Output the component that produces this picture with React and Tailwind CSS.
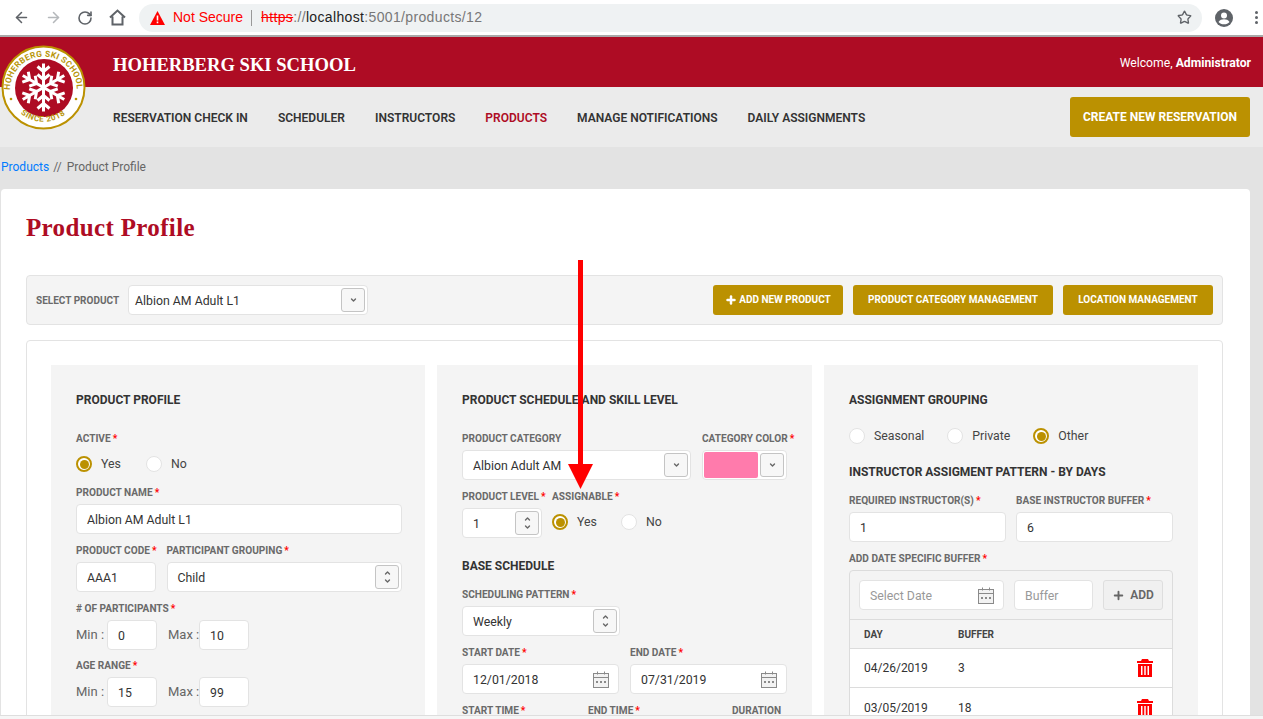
import { ArrowLeft, ArrowRight, RotateCw, Star, ChevronDown, ChevronUp, Plus } from 'lucide-react'

function Label({ children, req = true, className = '' }) {
  return (
    <div className={`h-4 mb-1 pt-[1px] flex items-center text-[10.100px] font-bold text-[#6a6a6a] whitespace-nowrap ${className}`}>
      {children}
      {req && <span className="text-[#f00] ml-[2px]">*</span>}
    </div>
  )
}

function Input({ value, placeholder, className = '', children }) {
  return (
    <div className={`h-[30px] bg-white border border-[#e3e3e3] rounded-[4px] flex items-center text-[12.300px] text-[#333] shrink-0 ${className}`}>
      {value !== undefined && <span className="pl-[10px] pt-[2px]">{value}</span>}
      {placeholder && <span className="pl-[10px] pt-[2px] text-[#999]">{placeholder}</span>}
      {children}
    </div>
  )
}

function SelectBtn({ both }) {
  return (
    <span className="ml-auto mr-[2px] w-6 h-6 border border-[#c4c4c4] rounded-[3px] flex flex-col items-center justify-center text-[#666] bg-[#f7f7f7]">
      {both && <ChevronUp className="w-[11px] h-[8px]" strokeWidth={4} />}
      <ChevronDown className="w-[11px] h-[8px]" strokeWidth={4} />
    </span>
  )
}

function Calendar() {
  return (
    <svg className="ml-auto mr-[9px]" width="16" height="17" viewBox="0 0 16 17" fill="none" stroke="#8a8a8a">
      <rect x="0.5" y="2.5" width="15" height="14" fill="#f2f2f2" />
      <path d="M0.5 6.5h15M4.5 0.5v3M11.5 0.5v3" />
      <path d="M3 11h2M7 11h2M11 11h2" strokeWidth="2" />
    </svg>
  )
}

function Radio({ label, checked, className = '' }) {
  return (
    <span className={`flex items-center text-[12.300px] text-[#444] ${className}`}>
      {checked ? (
        <span className="w-4 h-4 rounded-full border-2 border-[#bb9101] p-[1.500px] bg-white mr-[9px]">
          <span className="block w-full h-full rounded-full bg-[#bb9101]" />
        </span>
      ) : (
        <span className="w-4 h-4 rounded-full border border-[#e3e3e3] bg-white mr-[9px]" />
      )}
      {label}
    </span>
  )
}

function Title({ children, className = '' }) {
  return <div className={`text-[12px] font-bold text-[#333] whitespace-nowrap ${className}`}>{children}</div>
}

function GoldBtn({ children, className = '' }) {
  return (
    <button className={`h-[30px] pb-[1px] bg-[#bb9101] rounded-[3px] text-white text-[10px] font-bold flex items-center justify-center whitespace-nowrap ${className}`}>
      {children}
    </button>
  )
}

function Trash() {
  return (
    <svg width="16" height="18" viewBox="0 0 16 18" fill="#f00">
      <path d="M5 0h6l1 2h4v2H0V2h4z" />
      <path d="M1 5h14v13H1zM4 7v9h1.500V7zM7.250 7v9h1.500V7zM10.500 7v9H12V7z" fillRule="evenodd" />
    </svg>
  )
}

function Logo() {
  const arm = 'M0 0V-24M0 -8L-6 -13M0 -8L6 -13M0 -16L-6 -21M0 -16L6 -21'
  return (
    <svg className="absolute left-0 top-[44px]" width="88" height="88" viewBox="0 0 88 88">
      <circle cx="43.500" cy="43.500" r="41" fill="#fff" stroke="#bb9101" strokeWidth="2" />
      <circle cx="44" cy="44" r="29" fill="#ae0c24" />
      <defs>
        <path id="logo-top" d="M10 46A33.500 33.500 0 1 1 77 46" />
        <path id="logo-bottom" d="M14 62A35.500 35.500 0 0 0 73 62" />
      </defs>
      <text fill="#b8960a" fontSize="8.400" fontWeight="700" fontFamily="Roboto, sans-serif">
        <textPath href="#logo-top" textLength="104" lengthAdjust="spacing">HOHERBERG SKI SCHOOL</textPath>
      </text>
      <text fill="#b8960a" fontSize="8" fontWeight="700" fontFamily="Roboto, sans-serif">
        <textPath href="#logo-bottom" startOffset="10" textLength="48" lengthAdjust="spacing">SINCE 2018</textPath>
      </text>
      <circle cx="11" cy="55" r="1.300" fill="#bb9101" />
      <circle cx="76" cy="55" r="1.300" fill="#bb9101" />
      <g transform="translate(43.500 43.500)" stroke="#fff" strokeWidth="3" fill="none">
        {[0, 60, 120, 180, 240, 300].map((r) => (
          <path key={r} d={arm} transform={`rotate(${r})`} />
        ))}
      </g>
    </svg>
  )
}

function ChromeBar() {
  return (
    <div className="h-[37px] bg-white border-b-2 border-[#a9a9a9] flex items-center pl-[13px] shrink-0 font-['Liberation_Sans',sans-serif]">
      <ArrowLeft className="w-[17px] h-[17px] text-[#5f6368]" strokeWidth={2.2} />
      <ArrowRight className="w-[17px] h-[17px] text-[#b5b8bb] ml-[15px]" strokeWidth={2.2} />
      <RotateCw className="w-[16px] h-[16px] text-[#5f6368] ml-[15px]" strokeWidth={2.4} />
      <svg className="ml-[16px]" width="17" height="17" viewBox="0 0 17 17" fill="none" stroke="#5f6368" strokeWidth="2">
        <path d="M1 8.500L8.500 1.500L16 8.500M3.500 7.500V15.500H13.500V7.500" />
      </svg>
      <div className="ml-[13px] w-[1063px] h-7 rounded-full bg-[#eff2f3] flex items-center pl-[11px] text-[14px]">
        <svg width="15" height="14" viewBox="0 0 15 14">
          <path d="M7.500 0L15 14H0z" fill="#f00" />
          <path d="M6.700 4.500h1.600v5H6.700zM6.700 10.500h1.600v1.800H6.700z" fill="#fff" />
        </svg>
        <span className="text-[#f00] ml-[8px]">Not Secure</span>
        <span className="w-px h-4 bg-[#999] ml-2 mr-[9px]" />
        <span className="tracking-[0.350px]">
          <span className="text-[#f00] line-through">https</span>
          <span className="text-[#777]">://</span>
          <span className="text-[#222]">localhost</span>
          <span className="text-[#777]">:5001/products/12</span>
        </span>
        <Star className="ml-auto mr-[10px] w-[15px] h-[15px] text-[#5f6368]" strokeWidth={2.2} />
      </div>
      <svg className="ml-[13px]" width="18" height="18" viewBox="0 0 18 18">
        <circle cx="9" cy="9" r="9" fill="#5f6368" />
        <circle cx="9" cy="6.500" r="3" fill="#fff" />
        <path d="M3.500 13c1-2 3.500-2.700 5.500-2.700s4.500 .7 5.500 2.700c-1.300 1.500-3.300 2.300-5.500 2.300s-4.200-.8-5.500-2.300z" fill="#fff" />
      </svg>
      <div className="ml-[22px] flex flex-col gap-[2px]">
        <span className="w-[3px] h-[3px] rounded-full bg-[#5f6368]" />
        <span className="w-[3px] h-[3px] rounded-full bg-[#5f6368]" />
        <span className="w-[3px] h-[3px] rounded-full bg-[#5f6368]" />
      </div>
    </div>
  )
}

export default function App() {
  const nav = ['RESERVATION CHECK IN', 'SCHEDULER', 'INSTRUCTORS', 'PRODUCTS', 'MANAGE NOTIFICATIONS', 'DAILY ASSIGNMENTS']

  return (
    <div className="relative h-[719px] overflow-hidden bg-[#e3e3e3] font-['Roboto',sans-serif] flex flex-col">
      <ChromeBar />

      {/* Header */}
      <header className="h-[50px] bg-[#ae0c24] flex items-center justify-between pl-[113px] pr-3 shrink-0">
        <span className="font-['Liberation_Serif',serif] font-bold text-white text-[18.600px] mt-[5px]">HOHERBERG SKI SCHOOL</span>
        <span className="text-white text-[12.200px] mt-[2px]">Welcome, <b>Administrator</b></span>
      </header>

      {/* Nav */}
      <nav className="h-[60px] bg-[#ebebeb] flex items-center pl-[113px] pr-[13px] gap-[30px] shrink-0">
        {nav.map((n) => (
          <span key={n} className={`text-[12.030px] font-semibold whitespace-nowrap mt-[2px] ${n === 'PRODUCTS' ? 'text-[#ae0c24]' : 'text-[#333]'}`}>{n}</span>
        ))}
        <button className="ml-auto w-[180px] h-10 bg-[#bb9101] rounded-[3px] text-white text-[12px] font-bold">CREATE NEW RESERVATION</button>
      </nav>

      {/* Breadcrumb */}
      <div className="h-[42px] pb-[2px] flex items-center pl-[1px] text-[12px] text-[#666] shrink-0">
        <span className="text-[#007bff]">Products</span>
        <span className="ml-1">//</span>
        <span className="ml-[5px]">Product Profile</span>
      </div>

      {/* Card */}
      <main className="w-[1249px] ml-[1px] bg-white rounded-[4px] pt-[24px] px-[25px] flex-1 min-h-0">
        <h1 className="font-['Liberation_Serif',serif] font-bold text-[#ae0c24] text-[25px] tracking-[0.350px] leading-[30px] mb-[32px]">Product Profile</h1>

        <div className="h-[50px] w-[1197px] bg-[#f4f4f4] border border-[#e3e3e3] rounded-[4px] flex items-center pl-[9px] pr-[9px]">
          <span className="text-[10px] font-bold text-[#6a6a6a] mr-[9px] whitespace-nowrap">SELECT PRODUCT</span>
          <Input value="Albion AM Adult L1" className="w-[240px] [&>span:first-child]:pl-[6px]"><SelectBtn /></Input>
          <GoldBtn className="ml-auto w-[130px]"><Plus className="w-3 h-3 mr-[2px]" strokeWidth={5} />ADD NEW PRODUCT</GoldBtn>
          <GoldBtn className="ml-[10px] w-[200px]">PRODUCT CATEGORY MANAGEMENT</GoldBtn>
          <GoldBtn className="ml-[10px] w-[150px]">LOCATION MANAGEMENT</GoldBtn>
        </div>

        <div className="mt-[15px] w-[1197px] h-[400px] border border-[#e3e3e3] rounded-[4px] pt-[24px] px-[24px] grid grid-cols-[374px_375px_374px] gap-x-[12px]">
          {/* Profile */}
          <section className="bg-[#f4f4f4] pl-[25px] pr-[23px] pt-[26px]">
            <Title className="mb-[21px]">PRODUCT PROFILE</Title>
            <Label>ACTIVE</Label>
            <div className="flex h-[28px] mb-[6px] items-center">
              <Radio label="Yes" checked />
              <Radio label="No" className="ml-[25px]" />
            </div>
            <Label>PRODUCT NAME</Label>
            <Input value="Albion AM Adult L1" className="mb-2" />
            <div className="flex gap-[10px] mb-2">
              <div>
                <Label>PRODUCT CODE</Label>
                <Input value="AAA1" className="w-20" />
              </div>
              <div className="flex-1">
                <Label>PARTICIPANT GROUPING</Label>
                <Input value="Child"><SelectBtn both /></Input>
              </div>
            </div>
            <Label># OF PARTICIPANTS</Label>
            <div className="flex items-center text-[13px] text-[#666] mb-[7px] whitespace-nowrap">
              <span className="w-[31px]">Min :</span>
              <Input value="0" className="w-[50px]" />
              <span className="ml-[11px] w-[31px]">Max :</span>
              <Input value="10" className="w-[50px]" />
            </div>
            <Label>AGE RANGE</Label>
            <div className="flex items-center text-[13px] text-[#666] whitespace-nowrap">
              <span className="w-[31px]">Min :</span>
              <Input value="15" className="w-[50px]" />
              <span className="ml-[11px] w-[31px]">Max :</span>
              <Input value="99" className="w-[50px]" />
            </div>
          </section>

          {/* Schedule */}
          <section className="bg-[#f4f4f4] pl-[25px] pr-[24px] pt-[26px]">
            <Title className="mb-[21px]">PRODUCT SCHEDULE AND SKILL LEVEL</Title>
            <div className="flex gap-[11px] mb-2">
              <div className="w-[229px] shrink-0">
                <Label req={false}>PRODUCT CATEGORY</Label>
                <Input value="Albion Adult AM"><SelectBtn /></Input>
              </div>
              <div className="w-[85px] shrink-0">
                <Label>CATEGORY COLOR</Label>
                <Input className="pl-[1px]">
                  <span className="w-[54px] h-[26px] bg-[#ff7bac] rounded-[2px]" />
                  <SelectBtn />
                </Input>
              </div>
            </div>
            <div className="flex gap-[10px] mb-[19px]">
              <div className="w-20">
                <Label>PRODUCT LEVEL</Label>
                <Input value="1"><SelectBtn both /></Input>
              </div>
              <div>
                <Label>ASSIGNABLE</Label>
                <div className="flex h-[28px] items-center">
                  <Radio label="Yes" checked />
                  <Radio label="No" className="ml-[24px]" />
                </div>
              </div>
            </div>
            <Title className="mb-[11px]">BASE SCHEDULE</Title>
            <Label>SCHEDULING PATTERN</Label>
            <Input value="Weekly" className="w-[158px] mb-2"><SelectBtn both /></Input>
            <div className="flex gap-[11px] mb-2">
              <div className="w-[157px]">
                <Label>START DATE</Label>
                <Input value="12/01/2018"><Calendar /></Input>
              </div>
              <div className="w-[157px]">
                <Label>END DATE</Label>
                <Input value="07/31/2019"><Calendar /></Input>
              </div>
            </div>
            <div className="flex">
              <Label className="w-[126px]">START TIME</Label>
              <Label className="w-[144px]">END TIME</Label>
              <Label req={false}>DURATION</Label>
            </div>
          </section>

          {/* Assignment */}
          <section className="bg-[#f4f4f4] pl-[25px] pr-[25px] pt-[26px]">
            <Title className="mb-[17px]">ASSIGNMENT GROUPING</Title>
            <div className="flex h-5 items-center mb-[17px]">
              <Radio label="Seasonal" />
              <Radio label="Private" className="ml-[23px]" />
              <Radio label="Other" className="ml-[23px]" checked />
            </div>
            <Title className="mb-[11px]">INSTRUCTOR ASSIGMENT PATTERN - BY DAYS</Title>
            <div className="flex gap-[10px] mb-2">
              <div className="w-[157px]">
                <Label>REQUIRED INSTRUCTOR(S)</Label>
                <Input value="1" />
              </div>
              <div className="w-[157px]">
                <Label>BASE INSTRUCTOR BUFFER</Label>
                <Input value="6" />
              </div>
            </div>
            <Label>ADD DATE SPECIFIC BUFFER</Label>
            <div className="w-[324px] border border-[#dcdcdc] rounded-t-[4px] text-[12px] text-[#333]">
              <div className="h-[49px] flex items-center gap-[10px] px-[9px] border-b border-[#dcdcdc]">
                <Input placeholder="Select Date" className="w-[145px]"><Calendar /></Input>
                <Input placeholder="Buffer" className="w-[79px]" />
                <button className="w-[60px] h-[30px] border border-[#dedede] bg-[#f0f0f0] rounded-[3px] flex items-center justify-center gap-[5px] text-[12px] font-semibold text-[#666]">
                  <Plus className="w-[13px] h-[13px]" strokeWidth={3.5} />ADD
                </button>
              </div>
              <div className="h-[29px] flex items-center px-[14px] border-b border-[#dcdcdc] text-[10px] font-bold text-[#444]">
                <span className="w-[94px]">DAY</span>
                <span>BUFFER</span>
              </div>
              <div className="h-[39px] bg-white flex items-center pl-[14px] pr-[19px] border-b border-[#dcdcdc]">
                <span className="w-[94px]">04/26/2019</span>
                <span>3</span>
                <span className="ml-auto"><Trash /></span>
              </div>
              <div className="h-[39px] bg-white flex items-center pl-[14px] pr-[19px]">
                <span className="w-[94px]">03/05/2019</span>
                <span>18</span>
                <span className="ml-auto"><Trash /></span>
              </div>
            </div>
          </section>
        </div>
      </main>

      <Logo />

      {/* Annotation arrow */}
      <svg className="absolute left-[560px] top-[255px]" width="40" height="240" viewBox="0 0 40 240">
        <path d="M18 5H23V209H33L20.500 234L8 209H18Z" fill="#f00" />
      </svg>

      {/* Bottom edge of the window */}
      <div className="absolute left-0 right-0 bottom-0 h-1 bg-[#f6f6f6] border-t border-[#dedede]" />
    </div>
  )
}
